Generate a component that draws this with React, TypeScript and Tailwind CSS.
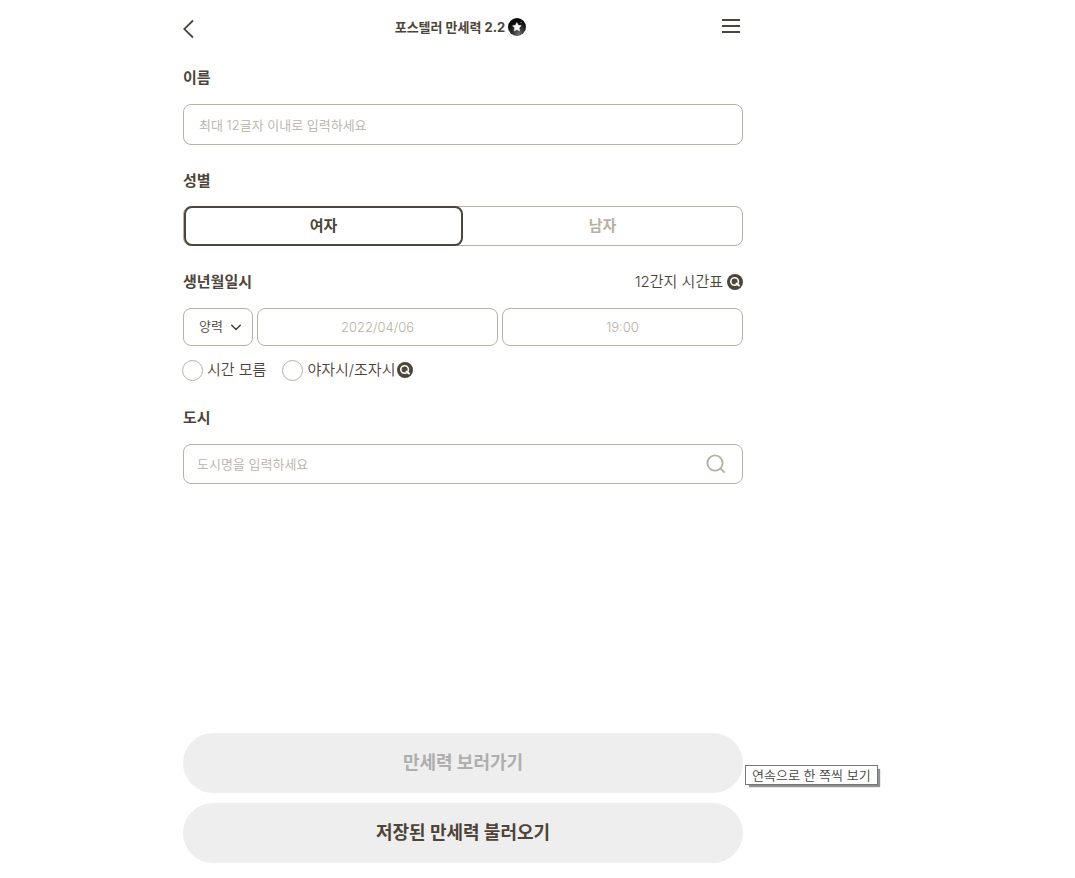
import { useState, type ReactNode } from "react";

function MagnifierBadge() {
  return (
    <svg viewBox="0 0 16 16" className="size-4 shrink-0" aria-hidden="true">
      <circle cx="8" cy="8" r="8" fill="#4d443a" />
      <circle cx="7.6" cy="7.5" r="3.8" fill="none" stroke="#fff" strokeWidth="1.6" />
      <path d="M9.4 9.4 12 11.6" stroke="#fff" strokeWidth="1.9" strokeLinecap="round" />
    </svg>
  );
}

function StarBadge() {
  return (
    <svg viewBox="0 0 18 18" className="size-[18px] shrink-0" aria-hidden="true">
      <defs>
        <radialGradient id="ball" cx="0.6" cy="0.9" r="0.75">
          <stop offset="0" stopColor="#707070" />
          <stop offset="0.5" stopColor="#2f2f2f" />
          <stop offset="1" stopColor="#050505" />
        </radialGradient>
      </defs>
      <circle cx="9" cy="9" r="9" fill="url(#ball)" />
      <path
        d="M8.8 4.6 10.2 7.3 13.2 7.7 11.1 9.9 11.6 12.9 8.9 11.5 6.2 12.9 6.7 9.9 4.6 7.8 7.5 7.3Z"
        fill="#fff"
        stroke="#fff"
        strokeWidth="0.5"
        strokeLinejoin="round"
      />
      <circle cx="13.2" cy="4.4" r="0.7" fill="#777" />
    </svg>
  );
}

function FieldTitle({ htmlFor, children }: { htmlFor: string; children: ReactNode }) {
  return (
    <label htmlFor={htmlFor} className="block text-[15px] leading-[22px] font-bold">
      {children}
    </label>
  );
}

function RoundCheck({ label }: { label: string }) {
  return (
    <label className="flex cursor-pointer items-center gap-1 text-[15px] leading-[22px]">
      <input
        type="checkbox"
        className="size-[21px] shrink-0 appearance-none rounded-full border border-[#b8b0a4] bg-white checked:bg-[#4d443a]"
      />
      {label}
    </label>
  );
}

const field =
  "w-full min-w-0 rounded-lg border border-[#b8b0a4] bg-white text-[13px] font-[350] text-[#4d443a] outline-none placeholder:text-[#b8b0a4] placeholder:opacity-100";

export default function App() {
  const [gender, setGender] = useState("여자");

  return (
    <div className="min-h-screen bg-white px-5 font-['Inter','Noto_Sans_CJK_KR',sans-serif] text-[#4d443a] lg:pl-[183px]">
      <main className="relative flex min-h-screen w-full max-w-[560px] flex-col pb-[15px]">
        <header className="flex h-[54px] items-center justify-between pr-[3px]">
          <button type="button" aria-label="뒤로" className="w-4 pt-1">
            <svg viewBox="0 0 16 20" className="h-5 w-4" fill="none" stroke="#4d443a" strokeWidth="1.8">
              <path d="M10 1.5 1.2 10 10 18.5" />
            </svg>
          </button>
          <h1 className="flex items-center gap-[3px] text-[13px] leading-5 font-bold">
            포스텔러 만세력 2.2
            <StarBadge />
          </h1>
          <button type="button" aria-label="메뉴" className="pb-0.5">
            <svg viewBox="0 0 18 14" className="h-[14px] w-[18px]" fill="#4d443a">
              <path d="M0 0h18v2H0zM0 6h18v2H0zM0 12h18v2H0z" />
            </svg>
          </button>
        </header>

        <form className="flex flex-1 flex-col" onSubmit={(e) => e.preventDefault()}>
          <section className="mt-[13px] flex flex-col gap-[15px]">
            <FieldTitle htmlFor="name">이름</FieldTitle>
            <input id="name" maxLength={12} placeholder="최대 12글자 이내로 입력하세요" className={`${field} h-[41px] px-[15px]`} />
          </section>

          <section className="mt-[25px] flex flex-col gap-[14px]">
            <h2 id="gender" className="text-[15px] leading-[22px] font-bold">성별</h2>
            <div role="group" aria-labelledby="gender" className="grid h-10 grid-cols-2 rounded-lg border border-[#b8b0a4]">
              {["여자", "남자"].map((g) => (
                <button
                  key={g}
                  type="button"
                  aria-pressed={gender === g}
                  onClick={() => setGender(g)}
                  className={`-my-px rounded-lg border-2 text-[15px] leading-[22px] font-bold ${
                    gender === g ? "border-[#4d443a]" : "border-transparent text-[#b8b0a4]"
                  }`}
                >
                  {g}
                </button>
              ))}
            </div>
          </section>

          <section className="mt-[25px]">
            <div className="flex items-center justify-between">
              <FieldTitle htmlFor="date">생년월일시</FieldTitle>
              <button type="button" className="flex items-center gap-1 text-[15px] leading-[22px] font-[350]">
                12간지 시간표
                <MagnifierBadge />
              </button>
            </div>
            <div className="mt-[15px] grid grid-cols-[70px_1fr_1fr] gap-1">
              <div className="relative">
                <select aria-label="달력" className={`${field} h-[38px] appearance-none pl-[15px]`}>
                  <option>양력</option>
                  <option>음력</option>
                </select>
                <svg
                  viewBox="0 0 10 6"
                  className="pointer-events-none absolute top-4 right-3 h-[7px] w-[10px]"
                  fill="none"
                  stroke="#4d443a"
                  strokeWidth="1.6"
                  strokeLinecap="round"
                  strokeLinejoin="round"
                >
                  <path d="M0.8 0.8 5 5 9.2 0.8" />
                </svg>
              </div>
              <input id="date" placeholder="2022/04/06" className={`${field} h-[38px] text-center`} />
              <input aria-label="시간" placeholder="19:00" className={`${field} h-[38px] text-center`} />
            </div>
            <div className="mt-[13px] -ml-px flex flex-wrap items-center gap-4 font-[350]">
              <RoundCheck label="시간 모름" />
              <div className="flex items-center gap-0.5">
                <RoundCheck label="야자시/조자시" />
                <button type="button" aria-label="야자시/조자시 설명">
                  <MagnifierBadge />
                </button>
              </div>
            </div>
          </section>

          <section className="mt-[26px] flex flex-col gap-[15px]">
            <FieldTitle htmlFor="city">도시</FieldTitle>
            <div className="relative">
              <input id="city" placeholder="도시명을 입력하세요" className={`${field} block h-10 pr-12 pl-[13px]`} />
              <button type="button" aria-label="도시 검색" className="absolute top-[10px] right-[17px]">
                <svg viewBox="0 0 20 20" className="size-5" fill="none" stroke="#b8b0a4" strokeWidth="1.9">
                  <circle cx="9" cy="9" r="7.6" />
                  <path d="M14.4 14.4 18.6 18.6" />
                </svg>
              </button>
            </div>
          </section>

          <div className="mt-auto flex flex-col gap-[10px] pt-10 text-lg font-bold">
            <button type="submit" disabled className="h-[60px] rounded-full bg-[#eeeeee] text-[#aeaeae]">
              만세력 보러가기
            </button>
            <button type="button" className="h-[60px] rounded-full bg-[#eeeeee]">
              저장된 만세력 불러오기
            </button>
          </div>
        </form>

        <div
          role="tooltip"
          className="absolute bottom-[93px] left-full ml-0.5 hidden h-5 items-center border border-[#767676] bg-white px-1.5 text-[13px] leading-4 font-[350] whitespace-nowrap text-[#444444] shadow-[3px_3px_1px_-1px_#909090] lg:flex"
        >
          연속으로 한 쪽씩 보기
        </div>
      </main>
    </div>
  );
}
